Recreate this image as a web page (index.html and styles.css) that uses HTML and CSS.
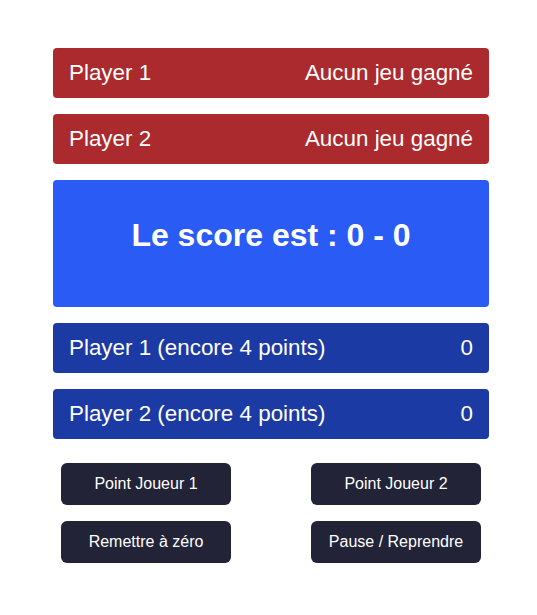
FILE: index.html
```html
<!DOCTYPE html>
<html lang="fr">
<head>
<meta charset="utf-8">
<title>Score</title>
<link rel="stylesheet" href="styles.css">
</head>
<body>
<main class="app">
  <div class="bar bar-red"><span>Player 1</span><span>Aucun jeu gagné</span></div>
  <div class="bar bar-red"><span>Player 2</span><span>Aucun jeu gagné</span></div>
  <div class="score"><h1 class="score-title">Le score est : 0 - 0</h1></div>
  <div class="bar bar-blue"><span>Player 1 (encore 4 points)</span><span>0</span></div>
  <div class="bar bar-blue"><span>Player 2 (encore 4 points)</span><span>0</span></div>
  <div class="actions">
    <button class="btn">Point Joueur 1</button>
    <button class="btn">Point Joueur 2</button>
    <button class="btn">Remettre à zéro</button>
    <button class="btn">Pause / Reprendre</button>
  </div>
</main>
</body>
</html>
```
FILE: styles.css
```css
* { box-sizing: border-box; }
html, body { margin: 0; padding: 0; background: #ffffff; }
body { font-family: "Liberation Sans", Arial, sans-serif; }

.app {
  width: 436px;
  margin: 48px 0 0 53px;
  display: flex;
  flex-direction: column;
  gap: 16px;
}

.bar {
  padding: 12px 16px;
  border-radius: 4px;
  display: flex;
  align-items: center;
  justify-content: space-between;
  color: #ffffff;
  font-size: 22.4px;
}
.bar-red { background: #ab2a2d; }
.bar-blue { background: #1c3aa3; }

.score {
  background: #2a5bf5;
  border-radius: 4px;
  height: 126.6px;
  padding-top: 37px;
  text-align: center;
  color: #ffffff;
}
.score-title {
  margin: 0;
  font-size: 32px;
  line-height: 37px;
  font-weight: 700;
}

.actions {
  margin-top: 8px;
  padding: 0 8px;
  display: grid;
  grid-template-columns: 170px 170px;
  justify-content: space-between;
  row-gap: 16px;
}
.btn {
  height: 42px;
  border: none;
  border-radius: 6px;
  background: #222337;
  color: #ffffff;
  font-family: "Liberation Sans", Arial, sans-serif;
  font-size: 16px;
  line-height: 18px;
  padding: 0;
  cursor: pointer;
}
```
